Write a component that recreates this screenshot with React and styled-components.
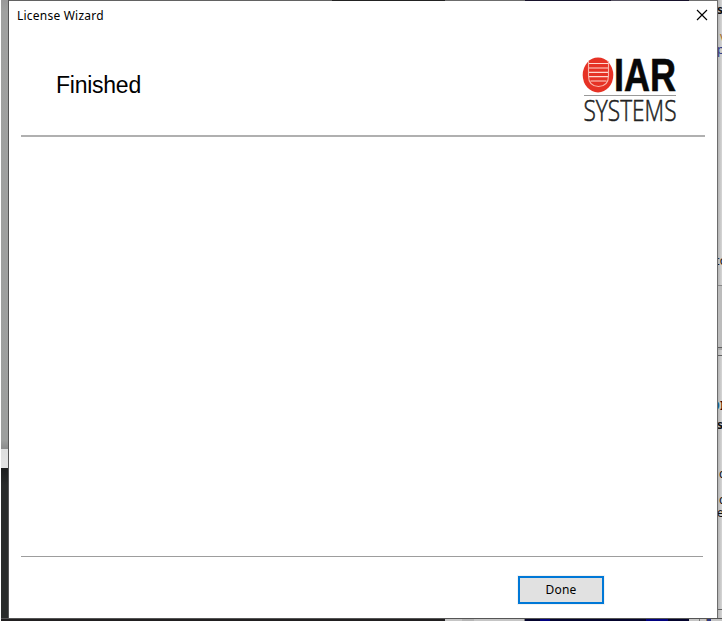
import React from "react";
import styled, { createGlobalStyle } from "styled-components";

const GlobalStyle = createGlobalStyle`
  * { box-sizing: border-box; }
  body { margin: 0; background: #fff; overflow: hidden; }
`;

const Desktop = styled.div`
  display: grid;
  grid-template-columns: 8px 710px 4px;
  grid-template-rows: 618px 3px;
  width: 722px;
  height: 621px;
  overflow: hidden;
`;

const LeftStrip = styled.div`
  margin-left: 1px;
  background: linear-gradient(#999 0, #a0a1a0 12px, #9d9f9e 440px, #8b8c8c 449px, #dedfdf 449px, #e4e4e4 468px, #1d1e1e 468px, #292b2a 485px, #292b2a 100%);
`;

const RightStrip = styled.div`
  position: relative;
  overflow: hidden;
  margin-left: -1px;
  border-left: 1px solid #6d6d6d;
  background: linear-gradient(90deg, #b5b5b5, #d6d6d6);
`;

const Rule = styled.div`
  position: absolute;
  left: 0;
  right: 0;
  top: ${(p) => p.$top}px;
  height: ${(p) => p.$height || 1}px;
  background: ${(p) => p.$color || "#606060"};
`;

const Fragment = styled.span`
  position: absolute;
  left: ${(p) => p.$left}px;
  top: ${(p) => p.$top}px;
  font: ${(p) => (p.$bold ? 700 : 400)} 12px/14px "Noto Sans", sans-serif;
  color: ${(p) => p.$color || "#111"};
`;

const BottomStrip = styled.div`
  grid-column: 1 / -1;
  margin-left: 1px;
  display: grid;
  grid-template-columns: 444px 17px 12px 50px 1px 164px 10px 23px;
  border-top: 1px solid #555;
`;

const Segment = styled.div`
  background: ${(p) => p.$fill};
`;

const Window = styled.main`
  display: flex;
  flex-direction: column;
  background: #fff;
  border: solid #6d6d6d;
  border-width: 0 1px;
  border-left-color: #555;
`;

const TopEdge = styled.div`
  height: 1px;
  background: linear-gradient(90deg, #626262 323px, #222 323px, #222 436px, #6c6c6c 436px, #6c6c6c 516px, #17122b 516px, #17122b 602px, #54505f 602px, #54505f 641px, #17122b 641px, #17122b 680px, #707070 680px);
`;

const TitleBar = styled.header`
  display: flex;
  justify-content: space-between;
  height: 29px;
  padding: 0 9px 0 8px;
`;

const Title = styled.div`
  font: 12px/29px "Noto Sans", sans-serif;
  letter-spacing: 0.22px;
  color: #000;
`;

const CloseButton = styled.button`
  display: flex;
  align-items: flex-start;
  padding: 8px 0 0;
  border: 0;
  background: none;
`;

const Banner = styled.section`
  display: flex;
  justify-content: space-between;
  height: 107px;
  margin: 0 12px;
  padding: 0 28px 0 35px;
  border-bottom: 2px solid #b0b0b0;
`;

const Heading = styled.h1`
  margin: 41px 0 0;
  font: 400 23px/28px "Liberation Sans", Arial, sans-serif;
  letter-spacing: -0.25px;
  color: #000;
`;

const Content = styled.section`
  flex: 1;
`;

const Footer = styled.footer`
  display: flex;
  justify-content: flex-end;
  height: 62px;
  margin: 0 14px 0 12px;
  padding: 19px 99px 0 0;
  border-top: 1px solid #9d9d9d;
`;

const DoneButton = styled.button`
  width: 86px;
  height: 28px;
  padding: 0;
  border: 2px solid #0078d7;
  background: #e1e1e1;
  box-shadow: 0 0 0 1px #f3f3f3;
  font: 12px/24px "Noto Sans", sans-serif;
  letter-spacing: 0.25px;
  color: #000;
`;

const LogoDrawing = styled.svg`
  display: block;
  margin-top: 24px;
  flex: none;
  overflow: visible;
`;

function Logo() {
  return (
    <LogoDrawing width="96" height="72" viewBox="0 0 96 72" role="img" aria-label="IAR Systems">
      <ellipse cx="17" cy="21" rx="15.3" ry="17.4" fill="#e63225" />
      <path d="M7.5 7V22Q7.5 32 17.5 32.5Q27.5 32 27.5 22V7" fill="none" stroke="#f9b5aa" strokeWidth="1.1" />
      <path d="M8 9.5H27M8 14H27M8 18.3H27M8 22.7H27M9.5 27H25.5" stroke="#ffd6ce" strokeWidth="1.2" />
      <text x="33" y="37" fontFamily="Liberation Sans, Arial, sans-serif" fontWeight="700" fontSize="46.5" textLength="62" lengthAdjust="spacingAndGlyphs" fill="#080808" stroke="#080808" strokeWidth="0.6">IAR</text>
      <path d="M3 41.5H95" stroke="#999" strokeWidth="1" />
      <text x="2.5" y="67" fontFamily="Open Sans, sans-serif" fontWeight="300" fontSize="30" textLength="93" lengthAdjust="spacingAndGlyphs" fill="#222" stroke="#222" strokeWidth="0.55">SYSTEMS</text>
    </LogoDrawing>
  );
}

const fragments = [
  { text: "s", left: -1, top: 3, bold: true },
  { text: "v", left: 2, top: 30, color: "#a16b22" },
  { text: "p", left: -1, top: 43, color: "#263580" },
  { text: "co", left: -4, top: 254 },
  { text: "D", left: -7, top: 399, color: "#165f91", bold: true },
  { text: "I", left: 2, top: 399, color: "#300", bold: true },
  { text: "s", left: -1, top: 418, bold: true },
  { text: "c", left: 1, top: 467 },
  { text: "c", left: 1, top: 493 },
  { text: "e", left: -1, top: 506 },
];

export default function App() {
  return (
    <>
      <GlobalStyle />
      <Desktop>
        <LeftStrip />
        <Window>
          <TopEdge />
          <TitleBar>
            <Title>License Wizard</Title>
            <CloseButton aria-label="Close">
              <svg width="12" height="12" viewBox="0 0 12 12">
                <path d="M1 1L11 11M11 1L1 11" stroke="#000" strokeWidth="1.15" />
              </svg>
            </CloseButton>
          </TitleBar>
          <Banner>
            <Heading>Finished</Heading>
            <Logo />
          </Banner>
          <Content />
          <Footer>
            <DoneButton>Done</DoneButton>
          </Footer>
        </Window>
        <RightStrip>
          <Rule $top={286} $height={61} $color="#bcbcbc" />
          <Rule $top={285} $color="#888" />
          <Rule $top={347} />
          <Rule $top={348} $height={2} $color="#aaa" />
          <Rule $top={355} />
          <Rule $top={609} />
          {fragments.map((f) => (
            <Fragment key={f.top + f.text} $left={f.left} $top={f.top} $bold={f.bold} $color={f.color}>
              {f.text}
            </Fragment>
          ))}
        </RightStrip>
        <BottomStrip>
          <Segment $fill="#211f20" />
          <Segment $fill="#c5c5c5" />
          <Segment $fill="#b5b5b5" />
          <Segment $fill="#c5c5c5" />
          <Segment $fill="#777" />
          <Segment $fill="linear-gradient(90deg, #03032c 15px, #000080 15px 25px, #03032c 25px 121px, #000080 121px 143px, #03032c 143px)" />
          <Segment $fill="#c5c5c5" />
          <Segment $fill="linear-gradient(90deg, #777 1px, #c5c5c5 1px 7px, #a98650 7px 8px, #303880 8px 12px, #c5c5c5 12px)" />
        </BottomStrip>
      </Desktop>
    </>
  );
}
